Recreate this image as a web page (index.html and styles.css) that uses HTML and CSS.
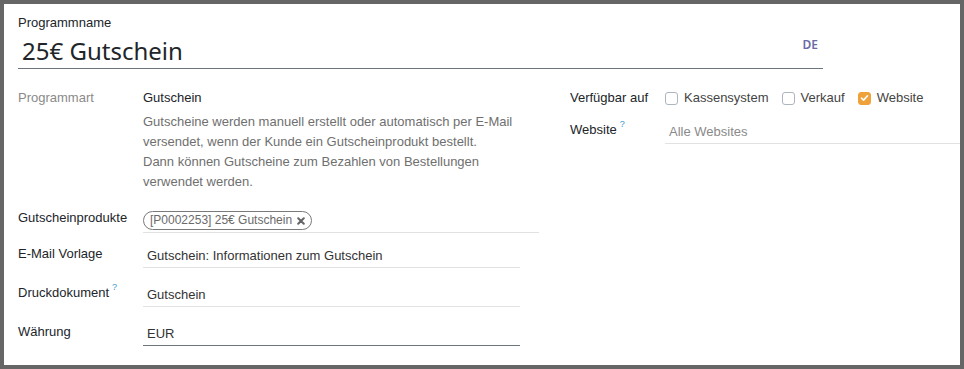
FILE: index.html
```html
<!DOCTYPE html>
<html lang="de">
<head>
<meta charset="utf-8">
<title>Programm</title>
<link rel="stylesheet" href="styles.css">
</head>
<body>
<div class="frame">
  <div class="sheet">
    <div class="title-block">
      <div class="title-label">Programmname</div>
      <div class="title-field">
        <span class="title-text">25€ Gutschein</span>
        <span class="lang">DE</span>
      </div>
    </div>

    <div class="group">
      <div class="col col-left">
        <div class="row row-type">
          <div class="label label-muted">Programmart</div>
          <div class="value-block">
            <div class="value-ro">Gutschein</div>
            <div class="help">
              <div>Gutscheine werden manuell erstellt oder automatisch per E-Mail versendet, wenn der Kunde ein Gutscheinprodukt bestellt.</div>
              <div>Dann können Gutscheine zum Bezahlen von Bestellungen verwendet werden.</div>
            </div>
          </div>
        </div>

        <div class="row row-tags">
          <div class="label">Gutscheinprodukte</div>
          <div class="field field-tags">
            <span class="tag">[P0002253] 25€ Gutschein
              <svg class="tag-x" width="8" height="8" viewBox="0 0 8 8"><path d="M1.2 1.2 L6.8 6.8 M6.8 1.2 L1.2 6.8" stroke="#666" stroke-width="2" stroke-linecap="round"/></svg>
            </span>
          </div>
        </div>

        <div class="row row-mail">
          <div class="label">E-Mail Vorlage</div>
          <div class="field">Gutschein: Informationen zum Gutschein</div>
        </div>

        <div class="row row-gap">
          <div class="label">Druckdokument<sup class="hint">?</sup></div>
          <div class="field">Gutschein</div>
        </div>

        <div class="row row-gap">
          <div class="label">Währung</div>
          <div class="field field-dark">EUR</div>
        </div>
      </div>

      <div class="col col-right">
        <div class="row">
          <div class="label label-r">Verfügbar auf</div>
          <div class="checks">
            <label class="check"><span class="box"></span>Kassensystem</label>
            <label class="check"><span class="box"></span>Verkauf</label>
            <label class="check"><span class="box box-on"><svg width="9" height="8" viewBox="0 0 9 8"><path d="M1.5 4.2 L3.6 6.1 L7.5 1.8" stroke="#fff" stroke-width="1.6" fill="none" stroke-linecap="round" stroke-linejoin="round"/></svg></span>Website</label>
          </div>
        </div>
        <div class="row row-site">
          <div class="label label-r">Website<sup class="hint">?</sup></div>
          <div class="field field-site">Alle Websites</div>
        </div>
      </div>
    </div>
  </div>
</div>
</body>
</html>
```

FILE: styles.css
```css
html, body {
  margin: 0;
  padding: 0;
}

body {
  width: 964px;
  height: 369px;
  overflow: hidden;
  font-family: "Liberation Sans", Arial, sans-serif;
  font-size: 13px;
  line-height: 20px;
  color: #212529;
}

.frame {
  box-sizing: border-box;
  width: 964px;
  height: 369px;
  border: 4px solid #666666;
  background: #ffffff;
  overflow: hidden;
}

.sheet {
  padding: 9px 0 0 14px;
}

.title-block {
  width: 805px;
}

.title-label {
  color: #212529;
}

.title-field {
  margin-top: 2px;
  display: flex;
  align-items: flex-start;
  justify-content: space-between;
  padding-bottom: 1px;
  border-bottom: 1px solid #6c757d;
}

.title-text {
  font-family: "Noto Sans", sans-serif;
  font-size: 24px;
  line-height: 32px;
  padding-left: 4px;
  color: #212529;
}

.lang {
  font-family: "Noto Sans", sans-serif;
  font-weight: 600;
  font-size: 12px;
  line-height: 14px;
  color: #6c6aa6;
  margin-top: 3px;
  margin-right: 5px;
}

.group {
  margin-top: 19px;
  display: grid;
  grid-template-columns: 552px 1fr;
}

.row {
  display: flex;
  align-items: flex-start;
}

.label {
  width: 125px;
  flex: none;
  color: #212529;
}

.label-r {
  width: 95px;
}

.label-muted {
  color: #8a8a8a;
}

.hint {
  font-size: 9px;
  line-height: 0;
  color: #3d9ad1;
  margin-left: 3px;
  vertical-align: 7px;
}

.value-ro {
  color: #212529;
}

.help {
  margin-top: 4px;
  width: 380px;
  color: #6f6f6f;
}

.row-tags {
  margin-top: 16px;
}

.row-mail {
  margin-top: 10px;
}

.row-gap {
  margin-top: 14px;
}

.row-mail .label,
.row-gap .label {
  padding-top: 1px;
}

.field {
  width: 373px;
  padding: 3px 0 1px 4px;
  border-bottom: 1px solid #e2e2e2;
  color: #333333;
}

.field-tags {
  width: 396px;
  padding: 2px 0 3px 0;
  height: 19px;
  line-height: 19px;
}

.field-dark {
  border-bottom-color: #6c757d;
}

.tag {
  box-sizing: border-box;
  display: inline-flex;
  align-items: center;
  height: 19px;
  padding: 0 6px 0 6px;
  border: 1px solid #7a7a7a;
  border-radius: 10px;
  font-size: 12px;
  color: #6a6a6a;
}

.tag-x {
  margin-left: 5px;
}

.checks {
  display: flex;
  align-items: center;
  height: 20px;
}

.check {
  display: flex;
  align-items: center;
  margin-right: 13px;
  color: #444444;
}

.box {
  box-sizing: border-box;
  width: 13px;
  height: 13px;
  border: 1px solid #adb5bd;
  border-radius: 3px;
  margin-right: 6px;
  background: #ffffff;
  display: flex;
  align-items: center;
  justify-content: center;
}

.box-on {
  background: #f0a23a;
  border-color: #f0a23a;
}

.row-site {
  margin-top: 12px;
}

.field-site {
  flex: 1;
  width: auto;
  padding: 2px 0 1px 4px;
  color: #8a8a8a;
}
```
